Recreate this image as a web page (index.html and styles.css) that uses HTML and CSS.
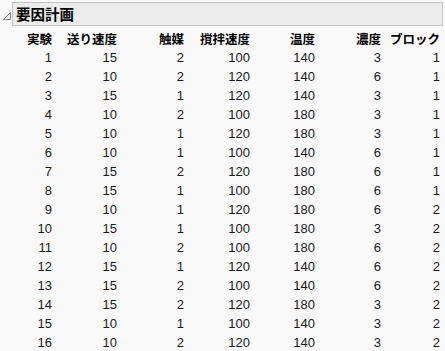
FILE: index.html
```html
<!DOCTYPE html>
<html lang="ja">
<head>
<meta charset="utf-8">
<link rel="stylesheet" href="styles.css">
</head>
<body>
<div class="report">
  <div class="outline">
    <svg class="tri" width="10" height="10" viewBox="0 0 10 10"><path d="M8.5 1.5 L8.5 8.5 L1.5 8.5 Z" fill="none" stroke="#8a8a8a" stroke-width="1"/></svg>
    <div class="title">要因計画</div>
  </div>
  <div class="grid">
    <div class="h">実験</div><div class="h">送り速度</div><div class="h">触媒</div><div class="h">撹拌速度</div><div class="h">温度</div><div class="h">濃度</div><div class="h">ブロック</div>
    <div>1</div><div>15</div><div>2</div><div>100</div><div>140</div><div>3</div><div>1</div>
    <div>2</div><div>10</div><div>2</div><div>120</div><div>140</div><div>6</div><div>1</div>
    <div>3</div><div>15</div><div>1</div><div>120</div><div>140</div><div>3</div><div>1</div>
    <div>4</div><div>10</div><div>2</div><div>100</div><div>180</div><div>3</div><div>1</div>
    <div>5</div><div>10</div><div>1</div><div>120</div><div>180</div><div>3</div><div>1</div>
    <div>6</div><div>10</div><div>1</div><div>100</div><div>140</div><div>6</div><div>1</div>
    <div>7</div><div>15</div><div>2</div><div>120</div><div>180</div><div>6</div><div>1</div>
    <div>8</div><div>15</div><div>1</div><div>100</div><div>180</div><div>6</div><div>1</div>
    <div>9</div><div>10</div><div>1</div><div>120</div><div>180</div><div>6</div><div>2</div>
    <div>10</div><div>15</div><div>1</div><div>100</div><div>180</div><div>3</div><div>2</div>
    <div>11</div><div>10</div><div>2</div><div>100</div><div>180</div><div>6</div><div>2</div>
    <div>12</div><div>15</div><div>1</div><div>120</div><div>140</div><div>6</div><div>2</div>
    <div>13</div><div>15</div><div>2</div><div>100</div><div>140</div><div>6</div><div>2</div>
    <div>14</div><div>15</div><div>2</div><div>120</div><div>180</div><div>3</div><div>2</div>
    <div>15</div><div>10</div><div>1</div><div>100</div><div>140</div><div>3</div><div>2</div>
    <div>16</div><div>10</div><div>2</div><div>120</div><div>140</div><div>3</div><div>2</div>
  </div>
</div>
</body>
</html>
```
FILE: styles.css
```css
html, body {
  margin: 0;
  padding: 0;
  background: #f9f9f9;
}
body {
  font-family: "Liberation Sans", "Noto Sans CJK JP", sans-serif;
  color: #1a1a1a;
  width: 445px;
  height: 351px;
  overflow: hidden;
}
.report {
  padding: 2px 2px 0 2px;
}
.outline {
  display: flex;
  align-items: flex-start;
}
.tri {
  margin-top: 9px;
  width: 10px;
  height: 10px;
  flex: none;
}
.title {
  flex: 1;
  height: 22px;
  line-height: 22px;
  background: #ececec;
  border: 1px solid #c4c4c4;
  padding-left: 3px;
  font-family: "Noto Sans CJK JP", sans-serif;
  font-weight: bold;
  font-size: 14.5px;
  color: #000;
}
.grid {
  display: grid;
  grid-template-columns: 50px 65px 67px 66px 65px 66px 59px;
  grid-auto-rows: 19px;
  margin-top: 3px;
  font-size: 13px;
  line-height: 19px;
}
.grid > div {
  text-align: right;
  white-space: nowrap;
}
.grid > .h {
  font-family: "Noto Sans CJK JP", sans-serif;
  font-weight: bold;
  font-size: 12.5px;
  color: #000;
}
```
